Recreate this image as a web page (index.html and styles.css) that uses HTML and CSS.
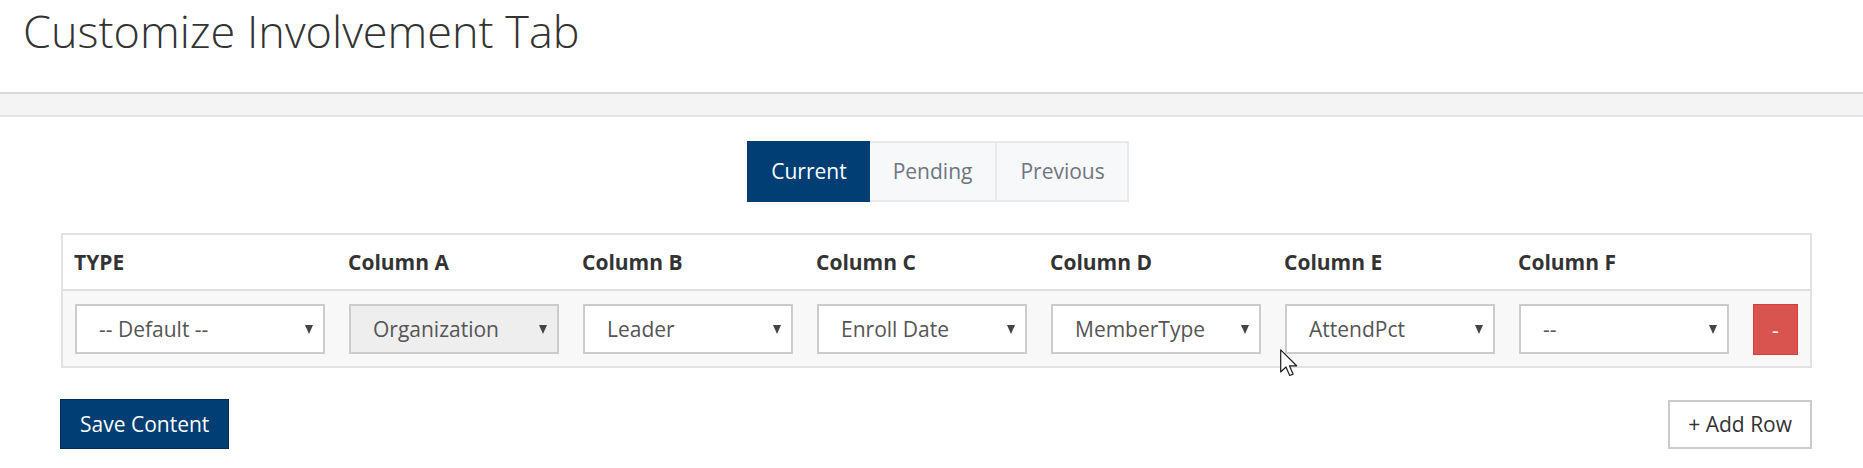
FILE: index.html
```html
<!DOCTYPE html>
<html lang="en">
<head>
<meta charset="utf-8">
<title>Customize Involvement Tab</title>
<link rel="stylesheet" href="styles.css">
</head>
<body>
<header class="page-header">
  <h1 class="page-title">Customize Involvement Tab</h1>
</header>
<div class="band"></div>
<main class="content">
  <div class="tabs-wrap">
    <div class="tabs">
      <span class="tab active">Current</span>
      <span class="tab">Pending</span>
      <span class="tab">Previous</span>
    </div>
  </div>
  <table class="grid">
    <colgroup>
      <col class="c-type">
      <col class="c-col"><col class="c-col"><col class="c-col">
      <col class="c-col"><col class="c-col"><col class="c-col">
      <col class="c-del">
    </colgroup>
    <thead>
      <tr>
        <th>TYPE</th>
        <th>Column A</th>
        <th>Column B</th>
        <th>Column C</th>
        <th>Column D</th>
        <th>Column E</th>
        <th>Column F</th>
        <th></th>
      </tr>
    </thead>
    <tbody>
      <tr>
        <td><div class="select"><span class="val">-- Default --</span><span class="caret"></span></div></td>
        <td><div class="select disabled"><span class="val">Organization</span><span class="caret"></span></div></td>
        <td><div class="select"><span class="val">Leader</span><span class="caret"></span></div></td>
        <td><div class="select"><span class="val">Enroll Date</span><span class="caret"></span></div></td>
        <td><div class="select"><span class="val">MemberType</span><span class="caret"></span></div></td>
        <td><div class="select"><span class="val">AttendPct</span><span class="caret"></span></div></td>
        <td><div class="select"><span class="val">--</span><span class="caret"></span></div></td>
        <td><span class="btn-del">-</span></td>
      </tr>
    </tbody>
  </table>
  <div class="actions">
    <span class="btn-save">Save Content</span>
    <span class="btn-add">+ Add Row</span>
  </div>
</main>
<svg class="cursor" width="18" height="28" viewBox="0 0 13 20" xmlns="http://www.w3.org/2000/svg">
  <path d="M0.5 0.5 L0.5 16.5 L4.3 12.9 L7 19 L9.4 18 L6.8 12 L12 12 Z" fill="#fff" stroke="#222" stroke-width="0.9" stroke-linejoin="round"/>
</svg>
</body>
</html>
```

FILE: styles.css
```css
html, body {
  margin: 0;
  padding: 0;
  background: #fff;
}

body {
  font-family: "Open Sans", "Liberation Sans", sans-serif;
  color: #333;
  position: relative;
}

.page-header {
  height: 92px;
  box-sizing: border-box;
  padding: 6px 0 0 23px;
}

.page-title {
  margin: 0;
  font-size: 45px;
  line-height: 50px;
  font-weight: 300;
  color: #333;
}

.band {
  height: 25px;
  box-sizing: border-box;
  background: #f4f4f4;
  border-top: 2px solid #dadada;
  border-bottom: 2px solid #e2e3e6;
}

.content {
  width: 1751px;
  margin: 0 0 0 61px;
  padding-top: 24px;
}

.tabs-wrap {
  display: flex;
  justify-content: center;
  padding-left: 3px;
}

.tabs {
  display: flex;
  border: 2px solid #e8e9ea;
  background: #f7f8fa;
}

.tab {
  display: block;
  height: 57px;
  line-height: 57px;
  padding: 0 23px;
  font-size: 21px;
  color: #6e7680;
  background: #f7f8fa;
}

.tab + .tab {
  border-left: 2px solid #e8e9ea;
}

.tab:last-child {
  padding: 0 22px 0 23px;
}

.tab.active {
  background: #003e73;
  color: #fff;
  margin: -2px 0 -2px -2px;
  height: 61px;
  line-height: 61px;
  padding: 0 23px 0 24px;
}

.tab.active + .tab {
  border-left: 0;
}

.grid {
  margin-top: 31px;
  width: 1751px;
  table-layout: fixed;
  border-collapse: separate;
  border-spacing: 0;
  border: 2px solid #e2e2e2;
}

.c-type { width: 274px; }
.c-col { width: 234px; }
.c-del { width: 69px; }

.grid th {
  text-align: left;
  font-size: 21px;
  font-weight: 700;
  color: #333;
  line-height: 30px;
  padding: 12px 11px;
  background: #fff;
  border-bottom: 2px solid #dedede;
}

.grid td {
  background: #f8f8f8;
  padding: 13px 12px 11px 12px;
  vertical-align: top;
}

.select {
  display: flex;
  align-items: center;
  justify-content: space-between;
  height: 50px;
  box-sizing: border-box;
  border: 2px solid #cccccc;
  background: #fff;
  padding: 0 10px 0 22px;
  font-size: 21px;
  color: #555;
}

.select.disabled {
  background: #eeeeee;
}

.caret {
  width: 0;
  height: 0;
  border-left: 4.5px solid transparent;
  border-right: 4.5px solid transparent;
  border-top: 9px solid #444;
}

.btn-del {
  display: flex;
  align-items: center;
  justify-content: center;
  width: 45px;
  height: 51px;
  box-sizing: border-box;
  background: #d9534f;
  border: 1px solid #d43f3a;
  color: #fff;
  font-size: 21px;
  margin-left: 0;
}

.actions {
  display: flex;
  justify-content: space-between;
  align-items: flex-start;
  margin-top: 31px;
}

.btn-save {
  display: block;
  margin-left: -1px;
  height: 50px;
  line-height: 48px;
  box-sizing: border-box;
  padding: 0 19px;
  background: #003e73;
  border: 1px solid #002c57;
  color: #fff;
  font-size: 21px;
}

.btn-add {
  display: block;
  margin-top: 1px;
  height: 49px;
  line-height: 45px;
  box-sizing: border-box;
  padding: 0 18px;
  background: #fff;
  border: 2px solid #cccccc;
  color: #333;
  font-size: 21px;
}

.cursor {
  position: absolute;
  left: 1280px;
  top: 349px;
}
```
